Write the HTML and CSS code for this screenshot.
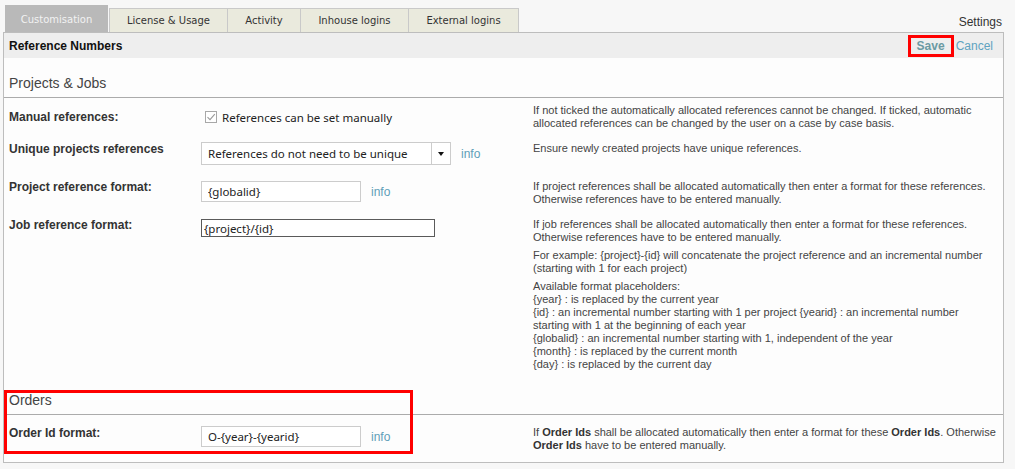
FILE: index.html
```html
<!DOCTYPE html>
<html lang="en">
<head>
<meta charset="utf-8">
<title>Settings - Reference Numbers</title>
<link rel="stylesheet" href="styles.css">
</head>
<body>
<div class="tabs-bar">
  <div class="tabs">
    <span class="tab tab--active tab--custom">Customisation</span>
    <span class="tab tab--license">License &amp; Usage</span>
    <span class="tab tab--activity">Activity</span>
    <span class="tab tab--inhouse">Inhouse logins</span>
    <span class="tab tab--external">External logins</span>
  </div>
  <span class="settings">Settings</span>
</div>

<div class="panel">
  <div class="panel-header">
    <span class="panel-title">Reference Numbers</span>
    <div class="actions">
      <a class="save">Save</a><a class="cancel">Cancel</a>
    </div>
  </div>

  <div class="section section--projects">
    <div class="section-title">Projects &amp; Jobs</div>

    <div class="row row--center">
      <div class="label">Manual references:</div>
      <div class="control">
        <label class="check">
          <span class="check-box"><svg width="10" height="10" viewBox="0 0 10 10"><path d="M1.5 5.2 L4 7.6 L8.8 2.2" fill="none" stroke="#9a9a9a" stroke-width="1.1"/></svg></span>
          <span class="check-text">References can be set manually</span>
        </label>
      </div>
      <div class="desc">If not ticked the automatically allocated references cannot be changed. If ticked, automatic allocated references can be changed by the user on a case by case basis.</div>
    </div>

    <div class="row">
      <div class="label">Unique projects references</div>
      <div class="control">
        <div class="select">
          <span class="select-value">References do not need to be unique</span>
          <span class="select-arrow"></span>
        </div>
        <a class="info">info</a>
      </div>
      <div class="desc">Ensure newly created projects have unique references.</div>
    </div>

    <div class="row">
      <div class="label">Project reference format:</div>
      <div class="control control--input">
        <input class="field" type="text" value="{globalid}">
        <a class="info">info</a>
      </div>
      <div class="desc">If project references shall be allocated automatically then enter a format for these references. Otherwise references have to be entered manually.</div>
    </div>

    <div class="row row--last">
      <div class="label">Job reference format:</div>
      <div class="control control--input">
        <input class="field field--active" type="text" value="{project}/{id}">
      </div>
      <div class="desc">
        <p>If job references shall be allocated automatically then enter a format for these references. Otherwise references have to be entered manually.</p>
        <p>For example: {project}-{id} will concatenate the project reference and an incremental number (starting with 1 for each project)</p>
        <p>Available format placeholders:<br>{year} : is replaced by the current year<br>{id} : an incremental number starting with 1 per project {yearid} : an incremental number starting with 1 at the beginning of each year<br>{globalid} : an incremental number starting with 1, independent of the year<br>{month} : is replaced by the current month<br>{day} : is replaced by the current day</p>
      </div>
    </div>
  </div>

  <div class="section section--orders">
    <div class="section-title">Orders</div>
    <div class="row row--orders">
      <div class="label">Order Id format:</div>
      <div class="control">
        <input class="field" type="text" value="O-{year}-{yearid}">
        <a class="info">info</a>
      </div>
      <div class="desc">If <b>Order Ids</b> shall be allocated automatically then enter a format for these <b>Order Ids</b>. Otherwise <b>Order Ids</b> have to be entered manually.</div>
    </div>
    <div class="highlight"></div>
  </div>
</div>
</body>
</html>
```

FILE: styles.css
```css
* { box-sizing: border-box; }

body {
  margin: 0;
  background: #f7f7f7;
  font-family: "Liberation Sans", Arial, sans-serif;
  color: #333;
}

/* Tabs */
.tabs-bar {
  display: flex;
  align-items: flex-end;
  height: 32px;
  padding: 0 13px 0 5px;
}
.tabs {
  display: flex;
  align-items: flex-end;
}
.tab {
  height: 24px;
  line-height: 23px;
  margin-left: -1px;
  background: #eaeadd;
  border: 1px solid #c9c9c9;
  border-bottom: none;
  font-family: "DejaVu Sans", Verdana, sans-serif;
  font-size: 10px;
  color: #333;
  text-align: center;
  white-space: nowrap;
}
.tab--active {
  height: 27px;
  padding-top: 3px;
  margin-left: 0;
  margin-right: 1px;
  border: none;
  background: #b9b9b9;
  color: #f2f2f2;
  line-height: 24px;
}
.tab--custom { width: 103px; }
.tab--license { width: 119px; margin-left: 0; }
.tab--activity { width: 74px; }
.tab--inhouse { width: 109px; }
.tab--external { width: 111px; }

.settings {
  margin-left: auto;
  font-size: 12px;
  line-height: 14px;
  padding-bottom: 3px;
  color: #333;
}

/* Panel */
.panel {
  margin-left: 3px;
  width: 1001px;
  border: 1px solid #bdbdbd;
  background: #fdfdfd;
}
.panel-header {
  height: 25px;
  background: #eeeeee;
  display: flex;
  align-items: center;
  justify-content: space-between;
  padding: 0 10px 0 5px;
}
.panel-title {
  font-weight: bold;
  font-size: 12px;
  color: #111;
}
.actions {
  display: flex;
  align-items: center;
  font-size: 12px;
}
.save {
  border: 3px solid #ff0000;
  padding: 0 6px;
  margin-right: 2px;
  line-height: 16px;
  font-weight: bold;
  color: #6b9aa3;
}
.cancel {
  color: #5fa3c0;
  line-height: 16px;
}

/* Sections */
.section { position: relative; }
.section-title {
  font-size: 14px;
  line-height: 16px;
  color: #444;
  padding: 17px 5px 6px;
  border-bottom: 1px solid #ababab;
}

.row {
  display: grid;
  grid-template-columns: 192px 332px 1fr;
  align-items: start;
  padding: 6px 8px 6px 5px;
}
.row--center { align-items: center; }
.row--last { padding-bottom: 4px; }
.row--orders { padding: 11px 2px 10px 5px; }

.label {
  font-weight: bold;
  font-size: 12px;
  line-height: 14px;
  color: #333;
}
.desc {
  font-size: 11px;
  line-height: 13px;
  color: #444;
  min-height: 26px;
}
.desc p { margin: 0 0 5px; }
.desc p:last-child { margin-bottom: 0; }
.desc b { color: #333; }

.control {
  display: flex;
  align-items: center;
  gap: 10px;
}
.control--input { padding-top: 1px; }

.check {
  display: flex;
  align-items: center;
  gap: 5px;
  padding-left: 4px;
}
.check-box {
  width: 12px;
  height: 12px;
  border: 1px solid #a8a8a8;
  background: #fff;
  display: flex;
  align-items: center;
  justify-content: center;
}
.check-text {
  font-family: "Noto Sans", sans-serif;
  font-size: 11.5px;
  color: #222;
}

.select {
  width: 250px;
  height: 23px;
  border: 1px solid #cccccc;
  background: #fff;
  display: flex;
}
.select-value {
  flex: 1;
  padding-left: 6px;
  font-family: "Noto Sans", sans-serif;
  font-size: 11.5px;
  line-height: 21px;
  color: #222;
  white-space: nowrap;
}
.select-arrow {
  width: 19px;
  border-left: 1px solid #cccccc;
  display: flex;
  align-items: center;
  justify-content: center;
}
.select-arrow::after {
  content: "";
  border-left: 3.5px solid transparent;
  border-right: 3.5px solid transparent;
  border-top: 4px solid #111;
}

.field {
  width: 160px;
  height: 21px;
  margin: 0;
  padding: 0 6px;
  border: 1px solid #cccccc;
  background: #fff;
  font-family: "Noto Sans", sans-serif;
  font-size: 11.5px;
  color: #222;
  outline: none;
}
.field--active {
  width: 234px;
  height: 18px;
  padding: 0 2px;
  border-color: #5a5a5a;
}

.info {
  font-size: 12px;
  color: #5f9fb9;
}

.highlight {
  position: absolute;
  left: 0;
  top: 15px;
  width: 409px;
  height: 64px;
  border: 3px solid #ff0000;
  pointer-events: none;
}
```
